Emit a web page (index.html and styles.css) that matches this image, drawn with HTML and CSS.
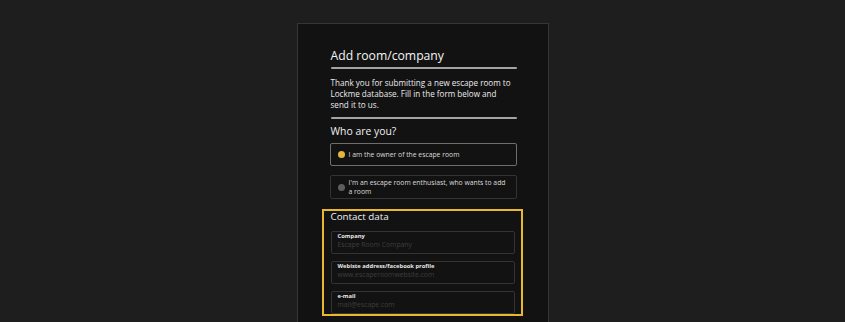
FILE: index.html
```html
<!DOCTYPE html>
<html lang="en">
<head>
<meta charset="utf-8">
<title>Add room/company</title>
<link rel="stylesheet" href="styles.css">
</head>
<body>
<div class="card">
  <h1 class="title">Add room/company</h1>
  <div class="rule"></div>
  <p class="intro">Thank you for submitting a new escape room to Lockme database. Fill in the form below and send it to us.</p>
  <div class="rule rule-2"></div>
  <h2 class="subtitle">Who are you?</h2>
  <div class="options">
    <div class="option option-active"><span class="dot dot-on"></span><span class="option-text">I am the owner of the escape room</span></div>
    <div class="option option-2"><span class="dot"></span><span class="option-text">I'm an escape room enthusiast, who wants to add a room</span></div>
  </div>
  <div class="contact">
    <h2 class="contact-title">Contact data</h2>
    <div class="fields">
      <div class="field"><div class="label">Company</div><div class="placeholder">Escape Room Company</div></div>
      <div class="field"><div class="label">Webiste address/facebook profile</div><div class="placeholder">www.escaperoomwebsite.com</div></div>
      <div class="field"><div class="label">e-mail</div><div class="placeholder">mail@escape.com</div></div>
    </div>
  </div>
</div>
</body>
</html>
```

FILE: styles.css
```css
* { box-sizing: border-box; }
html, body { margin: 0; padding: 0; }
body {
  background: #1e1e1e;
  font-family: "Open Sans", "Noto Sans", sans-serif;
  font-variant-ligatures: none;
  color: #e8e8e8;
  height: 322px;
  overflow: hidden;
}
.card {
  width: 252px;
  margin: 23px auto 0;
  background: #121212;
  border: 1px solid #363636;
  border-bottom: none;
  padding: 24px 31px 20px 33px;
  min-height: 320px;
}
.title {
  margin: 0;
  font-size: 12.2px;
  line-height: 16px;
  font-weight: 500;
  color: #f4f4f4;
}
.rule {
  height: 2px;
  background: #a4a4a4;
  margin-top: 3px;
  border-radius: 1px;
}
.intro {
  margin: 8px 0 0;
  font-size: 8.1px;
  line-height: 11px;
  color: #ececec;
}
.rule-2 { margin-top: 7px; }
.subtitle {
  margin: 5px 0 0;
  font-size: 10.4px;
  line-height: 14px;
  font-weight: 400;
  color: #f0f0f0;
}
.options {
  display: flex;
  flex-direction: column;
  gap: 9px;
  margin-top: 5px;
  margin-left: -1px;
}
.option {
  display: flex;
  align-items: center;
  gap: 4px;
  height: 23px;
  padding: 0 8px 0 7px;
  border: 1px solid #333;
  border-radius: 2px;
  font-size: 6.8px;
  line-height: 9px;
  color: #dcdcdc;
}
.option-active { border-color: #6e6e6e; }
.option-2 { height: 24px; }
.dot {
  flex: none;
  width: 7px;
  height: 7px;
  border-radius: 50%;
  background: #5e5e5e;
}
.dot-on { background: #e6b53a; }
.contact {
  margin: 10px -6px 0 -9px;
  border: 2px solid #e9b82e;
  padding: 0 6px 0 7px;
}
.contact-title {
  margin: 0;
  font-size: 9.8px;
  line-height: 12px;
  font-weight: 400;
  color: #f0f0f0;
}
.fields {
  display: flex;
  flex-direction: column;
  gap: 7px;
  margin-top: 8px;
}
.field {
  height: 23px;
  border: 1px solid #333;
  border-radius: 2px;
  padding: 1px 6px 0;
}
.label {
  font-size: 5.8px;
  line-height: 7px;
  font-weight: 700;
  color: #e8e8e8;
}
.placeholder {
  font-size: 6.8px;
  line-height: 9px;
  color: #3e3e3e;
}
```
